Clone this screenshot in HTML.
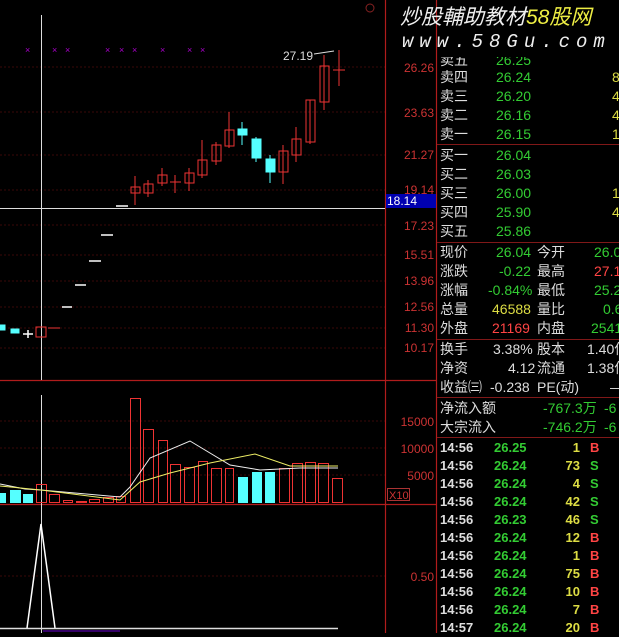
<!DOCTYPE html>
<html><head><meta charset="utf-8"><style>
body{margin:0;background:#000;width:619px;height:633px;overflow:hidden;position:relative;font-family:"Liberation Sans","Noto Sans CJK SC",sans-serif}
.t{position:absolute;white-space:nowrap;font-size:14px;line-height:16px}
.ax{position:absolute;font-size:12px;color:#c33;left:388px;width:46px;text-align:right;line-height:12px}
.w{color:#ddd}.g{color:#3c3}.r{color:#f44}.y{color:#dd4}
.hl{position:absolute;left:437px;width:182px;height:1px;background:#801818}
</style></head><body>
<svg width="619" height="633" style="position:absolute;left:0;top:0">
<g stroke="#3a0808" stroke-dasharray="2,2">
<line x1="0" y1="67" x2="385" y2="67"/><line x1="0" y1="112" x2="385" y2="112"/><line x1="0" y1="155" x2="385" y2="155"/><line x1="0" y1="190" x2="385" y2="190"/><line x1="0" y1="225" x2="385" y2="225"/><line x1="0" y1="255" x2="385" y2="255"/><line x1="0" y1="281" x2="385" y2="281"/><line x1="0" y1="307" x2="385" y2="307"/><line x1="0" y1="328" x2="385" y2="328"/><line x1="0" y1="348" x2="385" y2="348"/>
<line x1="0" y1="421" x2="385" y2="421"/><line x1="0" y1="448" x2="385" y2="448"/><line x1="0" y1="475" x2="385" y2="475"/><line x1="0" y1="576" x2="385" y2="576"/>
</g>
<g stroke="#b01c1c" stroke-width="1.2">
<line x1="385.5" y1="0" x2="385.5" y2="633"/><line x1="436.5" y1="0" x2="436.5" y2="633"/>
<line x1="0" y1="380.5" x2="436" y2="380.5"/><line x1="0" y1="504.5" x2="436" y2="504.5"/>
</g>
<circle cx="370" cy="8" r="4" fill="none" stroke="#822"/>
<g fill="#a0c" font-size="9">
<text x="25" y="53">×</text><text x="52" y="53">×</text><text x="65" y="53">×</text><text x="105" y="53">×</text><text x="119" y="53">×</text><text x="132" y="53">×</text><text x="160" y="53">×</text><text x="187" y="53">×</text><text x="200" y="53">×</text>
</g>
<line x1="0" y1="208.5" x2="385" y2="208.5" stroke="#ddd"/>
<line x1="41.5" y1="15" x2="41.5" y2="380" stroke="#ddd"/>
<line x1="41.5" y1="395" x2="41.5" y2="633" stroke="#ddd"/>
<g stroke="#e33" fill="none">
<line x1="135" y1="176" x2="135" y2="205"/><rect x="131" y="187" width="9" height="6"/>
<line x1="148" y1="180" x2="148" y2="197"/><rect x="144" y="184" width="9" height="9"/>
<line x1="162" y1="168" x2="162" y2="186"/><rect x="158" y="175" width="9" height="8"/>
<line x1="175" y1="175" x2="175" y2="193"/><line x1="170" y1="182" x2="181" y2="182"/>
<line x1="189" y1="168" x2="189" y2="191"/><rect x="185" y="173" width="9" height="10"/>
<line x1="202" y1="140" x2="202" y2="178"/><rect x="198" y="160" width="9" height="15"/>
<line x1="216" y1="142" x2="216" y2="165"/><rect x="212" y="145" width="9" height="16"/>
<line x1="229" y1="112" x2="229" y2="148"/><rect x="225" y="130" width="9" height="16"/>
<line x1="283" y1="145" x2="283" y2="184"/><rect x="279" y="151" width="9" height="21"/>
<line x1="296" y1="127" x2="296" y2="162"/><rect x="292" y="139" width="9" height="16"/>
<line x1="310" y1="100" x2="310" y2="144"/><rect x="306" y="100" width="9" height="42"/>
<line x1="324" y1="55" x2="324" y2="110"/><rect x="320" y="66" width="9" height="36"/>
<line x1="339" y1="50" x2="339" y2="86"/><line x1="333" y1="70" x2="345" y2="70"/>
<rect x="36" y="327" width="10" height="10"/><line x1="48" y1="328" x2="60" y2="328"/>
</g>
<g fill="#5ff" stroke="#5ff">
<line x1="242" y1="122" x2="242" y2="145"/><rect x="238" y="129" width="9" height="6"/>
<line x1="256" y1="137" x2="256" y2="162"/><rect x="252" y="139" width="9" height="19"/>
<line x1="270" y1="155" x2="270" y2="183"/><rect x="266" y="159" width="9" height="13"/>
<rect x="0" y="325" width="5" height="5"/><rect x="11" y="329" width="8" height="4"/>
</g>
<g stroke="#fff" stroke-width="1.5">
<line x1="116" y1="206" x2="128" y2="206"/><line x1="101" y1="235" x2="113" y2="235"/><line x1="89" y1="261" x2="101" y2="261"/><line x1="75" y1="285" x2="86" y2="285"/><line x1="62" y1="307" x2="72" y2="307"/><line x1="23" y1="334" x2="33" y2="334"/><line x1="28" y1="330" x2="28" y2="338"/>
</g>
<text x="283" y="60" fill="#ddd" font-size="12">27.19</text>
<line x1="314" y1="54" x2="334" y2="51" stroke="#ddd"/>
<!-- volume -->
<g fill="#5ff"><rect x="0" y="493" width="6" height="10"/><rect x="10" y="490" width="11" height="13"/><rect x="23" y="494" width="10" height="9"/><rect x="238" y="477" width="10" height="26"/><rect x="252" y="472" width="10" height="31"/><rect x="265" y="472" width="10" height="31"/></g>
<g fill="none" stroke="#e33">
<rect x="36.5" y="484.5" width="10" height="18"/><rect x="49.5" y="494.5" width="10" height="8"/><rect x="63.5" y="500.5" width="9" height="2"/><rect x="76.5" y="501.5" width="10" height="1"/><rect x="89.5" y="499.5" width="10" height="3"/><rect x="103.5" y="497.5" width="10" height="5"/><rect x="116.5" y="496.5" width="9" height="6"/>
<rect x="130.5" y="398.5" width="10" height="104"/><rect x="143.5" y="429.5" width="10" height="73"/><rect x="158.5" y="440.5" width="9" height="62"/><rect x="170.5" y="464.5" width="10" height="38"/><rect x="184.5" y="467.5" width="10" height="35"/><rect x="198.5" y="461.5" width="9" height="41"/><rect x="211.5" y="468.5" width="10" height="34"/><rect x="225.5" y="468.5" width="8" height="34"/>
<rect x="279.5" y="468.5" width="10" height="34"/><rect x="292.5" y="463.5" width="10" height="39"/><rect x="305.5" y="462.5" width="10" height="40"/><rect x="318.5" y="463.5" width="10" height="39"/><rect x="332.5" y="478.5" width="10" height="24"/>
</g>
<polyline fill="none" stroke="#eee" points="0,484 25,489 41,490 120,497 130,487 150,458 190,441 230,465 260,470 300,468 338,468"/>
<polyline fill="none" stroke="#ee6" points="0,486 41,490 120,500 140,482 170,473 210,463 255,454 290,466 338,466"/>
<rect x="387.5" y="488.5" width="22" height="12" fill="none" stroke="#a33"/>
<text x="389" y="499" fill="#c33" font-size="11">X10</text>
<line x1="0" y1="628.5" x2="338" y2="628.5" stroke="#ddd" stroke-width="1.5"/>
<polyline fill="none" stroke="#fff" stroke-width="1.5" points="27,628 41,524 55,628"/>
<line x1="43" y1="631" x2="120" y2="631" stroke="#60c"/>
<rect x="386" y="194" width="50" height="14" fill="#0000b0"/>
</svg>
<div class="ax" style="top:62px">26.26</div><div class="ax" style="top:107px">23.63</div><div class="ax" style="top:149px">21.27</div><div class="ax" style="top:184px">19.14</div>
<div class="ax" style="top:195px;color:#fff;left:387px;text-align:left">18.14</div>
<div class="ax" style="top:220px">17.23</div><div class="ax" style="top:249px">15.51</div><div class="ax" style="top:275px">13.96</div><div class="ax" style="top:301px">12.56</div><div class="ax" style="top:322px">11.30</div><div class="ax" style="top:342px">10.17</div>
<div class="ax" style="top:416px">15000</div><div class="ax" style="top:443px">10000</div><div class="ax" style="top:470px">5000</div><div class="ax" style="top:571px">0.50</div>
<div class="t" style="left:400px;top:6px;font-size:21px;line-height:24px;font-style:italic;color:#eee">炒股輔助教材<span style="color:#ee4">58股网</span></div>
<div class="t" style="left:402px;top:34px;font-size:19px;letter-spacing:6px;font-style:italic;color:#eee;font-family:'Liberation Mono',monospace">www.58Gu.com</div>
<div class="hl" style="top:144px"></div><div class="hl" style="top:242px"></div><div class="hl" style="top:339px"></div><div class="hl" style="top:397px"></div><div class="hl" style="top:437px"></div>
<div class="t w" style="left:440px;top:52px;clip-path:inset(5px 0 0 0)">卖五</div><div class="t g" style="left:496px;top:52px;clip-path:inset(5px 0 0 0)">26.25</div>
<div class="t w" style="left:440px;top:69px">卖四</div><div class="t g" style="left:496px;top:69px">26.24</div><div class="t y" style="left:612px;top:69px">8</div>
<div class="t w" style="left:440px;top:88px">卖三</div><div class="t g" style="left:496px;top:88px">26.20</div><div class="t y" style="left:612px;top:88px">4</div>
<div class="t w" style="left:440px;top:107px">卖二</div><div class="t g" style="left:496px;top:107px">26.16</div><div class="t y" style="left:612px;top:107px">4</div>
<div class="t w" style="left:440px;top:126px">卖一</div><div class="t g" style="left:496px;top:126px">26.15</div><div class="t y" style="left:612px;top:126px">1</div>
<div class="t w" style="left:440px;top:147px">买一</div><div class="t g" style="left:496px;top:147px">26.04</div>
<div class="t w" style="left:440px;top:166px">买二</div><div class="t g" style="left:496px;top:166px">26.03</div>
<div class="t w" style="left:440px;top:185px">买三</div><div class="t g" style="left:496px;top:185px">26.00</div><div class="t y" style="left:612px;top:185px">1</div>
<div class="t w" style="left:440px;top:204px">买四</div><div class="t g" style="left:496px;top:204px">25.90</div><div class="t y" style="left:612px;top:204px">4</div>
<div class="t w" style="left:440px;top:223px">买五</div><div class="t g" style="left:496px;top:223px">25.86</div>
<div class="t w" style="left:440px;top:244px">现价</div><div class="t g" style="left:496px;top:244px">26.04</div><div class="t w" style="left:537px;top:244px">今开</div><div class="t g" style="left:594px;top:244px">26.0</div>
<div class="t w" style="left:440px;top:263px">涨跌</div><div class="t g" style="left:499px;top:263px">-0.22</div><div class="t w" style="left:537px;top:263px">最高</div><div class="t r" style="left:594px;top:263px">27.1</div>
<div class="t w" style="left:440px;top:282px">涨幅</div><div class="t g" style="left:488px;top:282px">-0.84%</div><div class="t w" style="left:537px;top:282px">最低</div><div class="t g" style="left:594px;top:282px">25.2</div>
<div class="t w" style="left:440px;top:301px">总量</div><div class="t y" style="left:492px;top:301px">46588</div><div class="t w" style="left:537px;top:301px">量比</div><div class="t g" style="left:603px;top:301px">0.6</div>
<div class="t w" style="left:440px;top:320px">外盘</div><div class="t r" style="left:492px;top:320px">21169</div><div class="t w" style="left:537px;top:320px">内盘</div><div class="t g" style="left:591px;top:320px">2541</div>
<div class="t w" style="left:440px;top:341px">换手</div><div class="t w" style="left:493px;top:341px">3.38%</div><div class="t w" style="left:537px;top:341px">股本</div><div class="t w" style="left:587px;top:341px">1.40亿</div>
<div class="t w" style="left:440px;top:360px">净资</div><div class="t w" style="left:508px;top:360px">4.12</div><div class="t w" style="left:537px;top:360px">流通</div><div class="t w" style="left:587px;top:360px">1.38亿</div>
<div class="t w" style="left:440px;top:379px">收益㈢</div><div class="t w" style="left:490px;top:379px">-0.238</div><div class="t w" style="left:537px;top:379px">PE(动)</div><div class="t w" style="left:610px;top:379px">—</div>
<div class="t w" style="left:440px;top:400px">净流入额</div><div class="t g" style="left:543px;top:400px">-767.3万</div><div class="t g" style="left:604px;top:400px">-6</div>
<div class="t w" style="left:440px;top:419px">大宗流入</div><div class="t g" style="left:543px;top:419px">-746.2万</div><div class="t g" style="left:604px;top:419px">-6</div>
<div style="position:absolute;left:440px;top:439px;font-size:13px;line-height:18px;font-weight:bold;font-family:'Liberation Sans',sans-serif">
<div style="position:relative;height:18px"><span class="w">14:56</span><span class="g" style="position:absolute;left:54px">26.25</span><span class="y" style="position:absolute;right:-140px;width:40px;left:100px;text-align:right">1</span><span class="r" style="position:absolute;left:150px">B</span></div>
<div style="position:relative;height:18px"><span class="w">14:56</span><span class="g" style="position:absolute;left:54px">26.24</span><span class="y" style="position:absolute;width:40px;left:100px;text-align:right">73</span><span class="g" style="position:absolute;left:150px">S</span></div>
<div style="position:relative;height:18px"><span class="w">14:56</span><span class="g" style="position:absolute;left:54px">26.24</span><span class="y" style="position:absolute;width:40px;left:100px;text-align:right">4</span><span class="g" style="position:absolute;left:150px">S</span></div>
<div style="position:relative;height:18px"><span class="w">14:56</span><span class="g" style="position:absolute;left:54px">26.24</span><span class="y" style="position:absolute;width:40px;left:100px;text-align:right">42</span><span class="g" style="position:absolute;left:150px">S</span></div>
<div style="position:relative;height:18px"><span class="w">14:56</span><span class="g" style="position:absolute;left:54px">26.23</span><span class="y" style="position:absolute;width:40px;left:100px;text-align:right">46</span><span class="g" style="position:absolute;left:150px">S</span></div>
<div style="position:relative;height:18px"><span class="w">14:56</span><span class="g" style="position:absolute;left:54px">26.24</span><span class="y" style="position:absolute;width:40px;left:100px;text-align:right">12</span><span class="r" style="position:absolute;left:150px">B</span></div>
<div style="position:relative;height:18px"><span class="w">14:56</span><span class="g" style="position:absolute;left:54px">26.24</span><span class="y" style="position:absolute;width:40px;left:100px;text-align:right">1</span><span class="r" style="position:absolute;left:150px">B</span></div>
<div style="position:relative;height:18px"><span class="w">14:56</span><span class="g" style="position:absolute;left:54px">26.24</span><span class="y" style="position:absolute;width:40px;left:100px;text-align:right">75</span><span class="r" style="position:absolute;left:150px">B</span></div>
<div style="position:relative;height:18px"><span class="w">14:56</span><span class="g" style="position:absolute;left:54px">26.24</span><span class="y" style="position:absolute;width:40px;left:100px;text-align:right">10</span><span class="r" style="position:absolute;left:150px">B</span></div>
<div style="position:relative;height:18px"><span class="w">14:56</span><span class="g" style="position:absolute;left:54px">26.24</span><span class="y" style="position:absolute;width:40px;left:100px;text-align:right">7</span><span class="r" style="position:absolute;left:150px">B</span></div>
<div style="position:relative;height:18px"><span class="w">14:57</span><span class="g" style="position:absolute;left:54px">26.24</span><span class="y" style="position:absolute;width:40px;left:100px;text-align:right">20</span><span class="r" style="position:absolute;left:150px">B</span></div>
</div>
</body></html>
